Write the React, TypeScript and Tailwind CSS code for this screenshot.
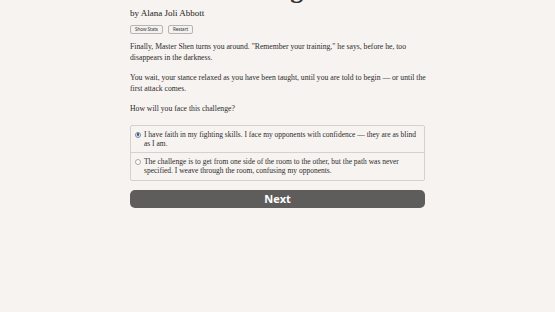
export default function App() {
  const serif = { fontFamily: '"Liberation Serif", "DejaVu Serif", serif' };
  return (
    <div className="w-[555px] h-[312px] overflow-hidden bg-[#f7f3f0]" style={serif}>
      <div className="w-[295px] ml-[130px] text-[#2b2b2b]">
        <h1 className="text-[26px] leading-[30px] font-bold mt-[-25px] text-[#333] whitespace-nowrap">Choice of Kung Fu</h1>
        <p className="text-[9px] leading-[12px] mt-[2px] text-[#222]">by Alana Joli Abbott</p>
        <div className="flex gap-[5px] mt-[6px]">
          <button className="h-[9px] px-[4px] text-[4.5px] leading-[7px] border border-[#b8b4b0] rounded-[2px] bg-[#f4f1ee] text-[#333] font-sans">
            Show Stats
          </button>
          <button className="h-[9px] px-[4px] text-[4.5px] leading-[7px] border border-[#b8b4b0] rounded-[2px] bg-[#f4f1ee] text-[#333] font-sans">
            Restart
          </button>
        </div>
        <div className="text-[7.7px] leading-[11px] mt-[7px] w-[305px]">
          <p>
            Finally, Master Shen turns you around. "Remember your training," he says, before he, too
            <br />
            disappears in the darkness.
          </p>
          <p className="mt-[9px]">
            You wait, your stance relaxed as you have been taught, until you are told to begin — or until the
            <br />
            first attack comes.
          </p>
          <p className="mt-[9px]">How will you face this challenge?</p>
        </div>
        <div className="mt-[11px] border border-[#d6d1cc] rounded-[2px] text-[7.5px] leading-[9px] bg-[#f7f3f0]">
          <div className="flex px-[4px] pt-[4px] pb-[4px] border-b border-[#d6d1cc]">
            <span className="w-[9px] shrink-0 pt-[1.5px]">
              <span className="block w-[6px] h-[6px] rounded-full border border-[#7a8ca0] bg-[#dfe8f2] flex items-center justify-center">
                <span className="block w-[2.5px] h-[2.5px] rounded-full bg-[#3b5675]" />
              </span>
            </span>
            <span>
              I have faith in my fighting skills. I face my opponents with confidence — they are as blind
              <br />
              as I am.
            </span>
          </div>
          <div className="flex px-[4px] pt-[4px] pb-[5px]">
            <span className="w-[9px] shrink-0 pt-[1.5px]">
              <span className="block w-[6px] h-[6px] rounded-full border border-[#a8a8a8] bg-white" />
            </span>
            <span>
              The challenge is to get from one side of the room to the other, but the path was never
              <br />
              specified. I weave through the room, confusing my opponents.
            </span>
          </div>
        </div>
        <button
          className="mt-[9px] w-full h-[18px] rounded-[5px] bg-[#5f5d5b] text-white text-[11px] font-bold leading-[18px]"
          style={{ fontFamily: '"Open Sans", "Liberation Sans", sans-serif' }}
        >
          Next
        </button>
      </div>
    </div>
  );
}
